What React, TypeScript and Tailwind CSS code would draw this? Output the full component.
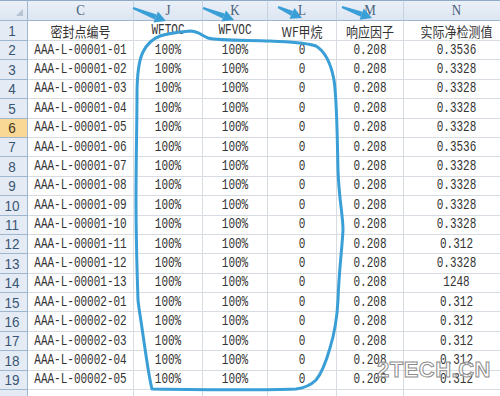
import React from "react";

const rows: [string, string, string, string, string, string][] = [
  ["AAA-L-00001-01", "100%", "100%", "0", "0.208", "0.3536"],
  ["AAA-L-00001-02", "100%", "100%", "0", "0.208", "0.3328"],
  ["AAA-L-00001-03", "100%", "100%", "0", "0.208", "0.3328"],
  ["AAA-L-00001-04", "100%", "100%", "0", "0.208", "0.3328"],
  ["AAA-L-00001-05", "100%", "100%", "0", "0.208", "0.3328"],
  ["AAA-L-00001-06", "100%", "100%", "0", "0.208", "0.3536"],
  ["AAA-L-00001-07", "100%", "100%", "0", "0.208", "0.3328"],
  ["AAA-L-00001-08", "100%", "100%", "0", "0.208", "0.3328"],
  ["AAA-L-00001-09", "100%", "100%", "0", "0.208", "0.3328"],
  ["AAA-L-00001-10", "100%", "100%", "0", "0.208", "0.3328"],
  ["AAA-L-00001-11", "100%", "100%", "0", "0.208", "0.312"],
  ["AAA-L-00001-12", "100%", "100%", "0", "0.208", "0.3328"],
  ["AAA-L-00001-13", "100%", "100%", "0", "0.208", "1248"],
  ["AAA-L-00002-01", "100%", "100%", "0", "0.208", "0.312"],
  ["AAA-L-00002-02", "100%", "100%", "0", "0.208", "0.312"],
  ["AAA-L-00002-03", "100%", "100%", "0", "0.208", "0.312"],
  ["AAA-L-00002-04", "100%", "100%", "0", "0.208", "0.312"],
  ["AAA-L-00002-05", "100%", "100%", "0", "0.208", "0.312"],
];

const cols = ["C", "J", "K", "L", "M", "N"];
const heads = ["密封点编号", "WFTOC", "WFVOC", "WF甲烷", "响应因子", "实际净检测值"];

const monoFont = "font-['Liberation_Mono','Noto_Sans_CJK_SC',monospace]";
const cjkFont = "font-['Noto_Sans_CJK_SC',sans-serif]";

function RowNum({ n, selected }: { n: number | null; selected?: boolean }) {
  return (
    <div
      className={`flex items-center justify-center border-r border-b border-[#9eb6ce] ${
        selected ? "bg-[#f8d894] text-[#3d3320]" : "bg-[#e4ebf5] text-[#3a5573]"
      } font-['Liberation_Sans',sans-serif] text-[13.5px] leading-none pr-[3px] overflow-hidden`}
    >
      <span className="inline-block scale-y-[1.12]">{n}</span>
    </div>
  );
}

function Cell({ children, cjk }: { children: React.ReactNode; cjk?: boolean }) {
  return (
    <div
      className={`flex items-center justify-center border-r border-b border-[#d7dbe2] bg-white text-[#333333] ${
        cjk ? `${cjkFont} text-[12px]` : `${monoFont} text-[11px]`
      } leading-none whitespace-nowrap overflow-hidden`}
    >
      <span className={`inline-block ${cjk ? "scale-y-[1.1]" : "scale-y-[1.25]"}`}>{children}</span>
    </div>
  );
}

function arrow(x1: number, y1: number, x2: number, y2: number) {
  const dx = x2 - x1;
  const dy = y2 - y1;
  const len = Math.sqrt(dx * dx + dy * dy);
  const ux = dx / len;
  const uy = dy / len;
  const px = -uy;
  const py = ux;
  const hl = 11;
  const hw = 6;
  const bx = x2 - ux * hl;
  const by = y2 - uy * hl;
  const tail = `M ${x1 + px * 1} ${y1 + py * 1} L ${bx + px * 2.6} ${by + py * 2.6} L ${bx - px * 2.6} ${by - py * 2.6} L ${x1 - px * 1} ${y1 - py * 1} Z`;
  const head = `M ${x2} ${y2} L ${bx + px * hw} ${by + py * hw} L ${bx - px * hw} ${by - py * hw} Z`;
  return (
    <g key={`${x1}-${y1}`}>
      <path d={tail} fill="#3a9fd6" />
      <path d={head} fill="#3a9fd6" />
    </g>
  );
}

export default function App() {
  return (
    <div className="relative w-[500px] h-[396px] overflow-hidden bg-white">
      <div className="grid grid-cols-[28px_106px_69px_65px_69px_67px_106px] grid-rows-[21px_20px_repeat(18,19.4px)_20px] w-[510px]">
        <div className="relative bg-gradient-to-b from-[#eaf0f8] to-[#dde6f2] border-r border-b border-[#9eb6ce] border-t border-t-[#8fa9c6]">
          <div className="absolute right-[4px] bottom-[4px] w-0 h-0 border-l-[7px] border-l-transparent border-b-[7px] border-b-[#b6c3d3]" />
        </div>
        {cols.map((c) => (
          <div
            key={c}
            className="flex items-center justify-center bg-gradient-to-b from-[#eaf0f8] to-[#dde6f2] border-r border-r-[#c5d2e2] border-b border-[#9eb6ce] border-t border-t-[#8fa9c6] text-[#4a5f78] font-['Liberation_Serif',serif] text-[13px] leading-none"
          >
            <span className="inline-block scale-y-[1.1]">{c}</span>
          </div>
        ))}
        <RowNum n={1} />
        {heads.map((h, i) => (
          <Cell key={h} cjk={i !== 1 && i !== 2}>
            {h}
          </Cell>
        ))}
        {rows.map((r, i) => (
          <React.Fragment key={i}>
            <RowNum n={i + 2} selected={i + 2 === 6} />
            {r.map((v, j) => (
              <Cell key={j}>{v}</Cell>
            ))}
          </React.Fragment>
        ))}
        <RowNum n={null} />
        {cols.map((c) => (
          <Cell key={"e" + c}>{""}</Cell>
        ))}
      </div>

      <svg className="absolute left-0 top-0 pointer-events-none" width="500" height="396" viewBox="0 0 500 396">
        <path
          d="M 138 300 C 137 270 136 230 136 200 C 136 160 137 120 137 95 C 137 75 139 60 143 52 C 147 44 152 39 160 36 C 168 33 180 32 190 31 C 198 31 201 35 208 38 C 220 41 250 40 270 41 C 290 42 305 42 316 46 C 326 52 331 64 334 80 C 337 100 337 130 338 170 C 339 200 343 215 343 230 C 342 250 339 270 338 300 C 337 320 334 335 330 348 C 326 362 321 374 316 380 C 310 386 304 388 296 389 C 270 390 220 390 152 389 C 149 378 146 355 143 335 C 141 320 139 310 138 300 Z"
          fill="none"
          stroke="#3a9fd6"
          strokeWidth="3"
          strokeLinejoin="round"
        />
        {arrow(133, 8, 166, 21)}
        {arrow(203, 8, 234, 20)}
        {arrow(278, 7, 302, 18)}
        {arrow(342, 7, 372, 18)}
      </svg>

      <div className="absolute left-[377px] top-[359px] font-['Liberation_Sans',sans-serif] font-bold text-[22px] leading-none text-[rgba(255,255,255,0.55)] [-webkit-text-stroke:1px_#8c8c8c] tracking-[0.5px]">
        2TECH.CN
      </div>
    </div>
  );
}
